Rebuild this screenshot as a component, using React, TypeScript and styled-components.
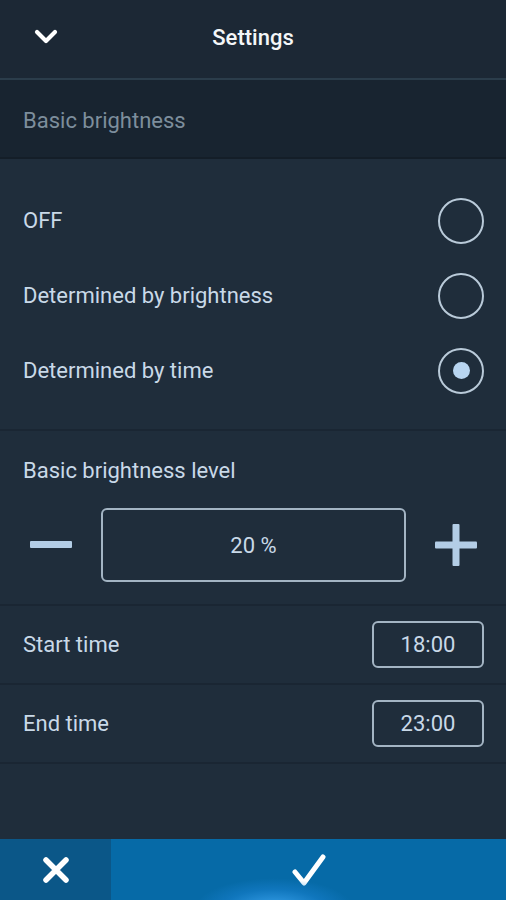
import { useState } from "react";
import styled, { createGlobalStyle } from "styled-components";

const GlobalStyle = createGlobalStyle`
  html, body {
    margin: 0;
    padding: 0;
    background: #1f2d3b;
  }
  * {
    box-sizing: border-box;
  }
`;

const Screen = styled.div`
  width: 506px;
  height: 900px;
  display: flex;
  flex-direction: column;
  background: #1f2d3b;
  font-family: Roboto, "Liberation Sans", sans-serif;
  font-size: 22px;
  color: #c9d9e8;
  overflow: hidden;
`;

const Header = styled.header`
  height: 80px;
  display: grid;
  grid-template-columns: 92px 1fr 92px;
  align-items: center;
  background: #1c2835;
  border-bottom: 2px solid #2b3d4b;
  padding-bottom: 4px;
`;

const BackButton = styled.button`
  background: none;
  border: none;
  padding: 0;
  display: flex;
  justify-content: center;
  cursor: pointer;
`;

const Title = styled.h1`
  margin: 0;
  text-align: center;
  font-size: 22px;
  font-weight: 500;
  color: #f4f6f8;
`;

const SectionHeader = styled.div`
  height: 79px;
  display: flex;
  align-items: center;
  padding: 4px 23px 0 23px;
  background: #182430;
  border-bottom: 2px solid #141e28;
  color: #7d8e9c;
`;

const Group = styled.section`
  border-bottom: 2px solid #1a2633;
`;

const RadioList = styled(Group)`
  padding: 24px 0 21px;
`;

const RadioRow = styled.label`
  height: 75px;
  display: flex;
  align-items: center;
  justify-content: space-between;
  padding: 0 22px 0 23px;
  cursor: pointer;
`;

const RadioCircle = styled.span<{ $checked: boolean }>`
  width: 46px;
  height: 46px;
  border-radius: 50%;
  border: 2px solid #b9cad9;
  display: flex;
  align-items: center;
  justify-content: center;
  &::after {
    content: "";
    width: 17px;
    height: 17px;
    border-radius: 50%;
    background: #b8d5f0;
    display: ${(p) => (p.$checked ? "block" : "none")};
  }
`;

const LevelGroup = styled(Group)`
  padding: 25px 0 22px;
`;

const GroupLabel = styled.div`
  padding: 0 23px;
  line-height: 30px;
`;

const Stepper = styled.div`
  display: grid;
  grid-template-columns: 101px 305px 100px;
  align-items: center;
  margin-top: 22px;
`;

const StepButton = styled.button`
  background: none;
  border: none;
  padding: 0;
  height: 73px;
  display: flex;
  align-items: center;
  justify-content: center;
  cursor: pointer;
`;

const ValueBox = styled.div`
  height: 74px;
  border: 2px solid #a3b4c3;
  border-radius: 6px;
  display: flex;
  align-items: center;
  justify-content: center;
`;

const TimeRow = styled(Group)`
  height: 79px;
  display: flex;
  align-items: center;
  justify-content: space-between;
  padding: 0 22px 0 23px;
`;

const TimeBox = styled.div`
  width: 112px;
  height: 47px;
  border: 2px solid #a3b4c3;
  border-radius: 6px;
  display: flex;
  align-items: center;
  justify-content: center;
`;

const Spacer = styled.div`
  flex: 1;
`;

const Footer = styled.footer`
  height: 61px;
  display: grid;
  grid-template-columns: 111px 1fr;
`;

const FooterButton = styled.button<{ $primary?: boolean }>`
  position: relative;
  overflow: hidden;
  border: none;
  padding: 0;
  display: flex;
  align-items: center;
  justify-content: center;
  background: ${(p) => (p.$primary ? "#066aa7" : "#0b5788")};
  cursor: pointer;
`;

// touch ripple glow at the bottom of the confirm button
const Ripple = styled.span`
  position: absolute;
  left: 50%;
  bottom: -40px;
  width: 160px;
  height: 62px;
  margin-left: -115px;
  border-radius: 50%;
  background: radial-gradient(ellipse at center, rgba(60, 165, 240, 0.95) 0%, rgba(25, 130, 210, 0.5) 45%, rgba(6, 106, 167, 0) 70%);
`;

const options = ["OFF", "Determined by brightness", "Determined by time"];

export default function App() {
  const [selected, setSelected] = useState(2);
  const [level, setLevel] = useState(20);

  return (
    <Screen>
      <GlobalStyle />
      <Header>
        <BackButton aria-label="Back">
          <svg width="24" height="16" viewBox="0 0 24 16">
            <path d="M3 3 L12 12 L21 3" fill="none" stroke="#ffffff" strokeWidth="4.2" strokeLinecap="round" strokeLinejoin="round" />
          </svg>
        </BackButton>
        <Title>Settings</Title>
        <span />
      </Header>

      <SectionHeader>Basic brightness</SectionHeader>

      <RadioList>
        {options.map((o, i) => (
          <RadioRow key={o} onClick={() => setSelected(i)}>
            {o}
            <RadioCircle $checked={selected === i} />
          </RadioRow>
        ))}
      </RadioList>

      <LevelGroup>
        <GroupLabel>Basic brightness level</GroupLabel>
        <Stepper>
          <StepButton aria-label="Decrease" onClick={() => setLevel((v) => Math.max(0, v - 10))}>
            <svg width="42" height="8" viewBox="0 0 42 8">
              <rect x="0" y="0" width="42" height="7" rx="1" fill="#b3cde6" />
            </svg>
          </StepButton>
          <ValueBox>{level} %</ValueBox>
          <StepButton aria-label="Increase" onClick={() => setLevel((v) => Math.min(100, v + 10))}>
            <svg width="42" height="42" viewBox="0 0 42 42">
              <rect x="0" y="17.5" width="42" height="7" rx="1" fill="#b3cde6" />
              <rect x="17.5" y="0" width="7" height="42" rx="1" fill="#b3cde6" />
            </svg>
          </StepButton>
        </Stepper>
      </LevelGroup>

      <TimeRow>
        Start time
        <TimeBox>18:00</TimeBox>
      </TimeRow>
      <TimeRow>
        End time
        <TimeBox>23:00</TimeBox>
      </TimeRow>

      <Spacer />

      <Footer>
        <FooterButton aria-label="Cancel">
          <svg width="28" height="28" viewBox="0 0 28 28">
            <path d="M4 4 L24 24 M24 4 L4 24" stroke="#ffffff" strokeWidth="5.5" strokeLinecap="round" />
          </svg>
        </FooterButton>
        <FooterButton $primary aria-label="Confirm">
          <Ripple />
          <svg width="34" height="34" viewBox="0 0 34 34">
            <path d="M3 19 L12 30 L31 4" fill="none" stroke="#ffffff" strokeWidth="5" strokeLinecap="round" strokeLinejoin="round" />
          </svg>
        </FooterButton>
      </Footer>
    </Screen>
  );
}
